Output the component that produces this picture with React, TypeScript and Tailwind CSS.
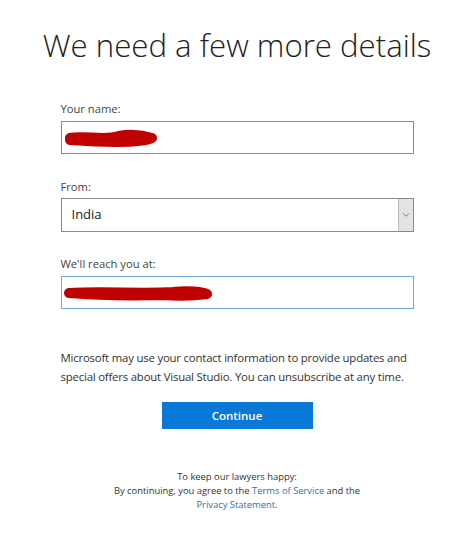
import { ChevronDown } from 'lucide-react';

function Scribble({ width, d }: { width: number; d: string }) {
  return (
    <svg width={width} height={18} viewBox={`0 0 ${width} 18`} className="block">
      <path d={d} stroke="#c00000" strokeWidth={10} strokeLinecap="round" strokeLinejoin="round" fill="none" />
    </svg>
  );
}

export default function App() {
  return (
    <div className="min-h-[549px] w-full bg-white text-[#333] font-['Open_Sans',sans-serif]">
      <h1 className="pt-[23px] text-center text-[31.2px] font-light leading-[44px] text-[#222]">
        We need a few more details
      </h1>

      <div className="mx-auto mt-[35px] w-[353px]">
        <label className="block text-[11.2px] leading-[14px] text-[#444]">Your name:</label>
        <div className="mt-[5px] flex h-[33px] items-center border border-[#8a8a8a] px-[2px]">
          <Scribble width={94} d="M6 9 C 20 6, 40 12, 55 7 C 70 4, 82 7, 88 9 C 80 13, 50 14, 6 11" />
        </div>

        <label className="mt-[26px] block text-[11.2px] leading-[14px] text-[#444]">From:</label>
        <div className="mt-[4px] flex h-[34px] items-stretch border border-[#8a8a8a]">
          <div className="flex flex-1 items-center pl-[10px] text-[13px] text-[#222]">India</div>
          <div className="flex w-[15px] items-center justify-center border-l border-[#bdbdbd] bg-[#e3e3e3] text-[#555]">
            <ChevronDown size={10} strokeWidth={1.75} />
          </div>
        </div>

        <label className="mt-[25px] block text-[11.2px] leading-[14px] text-[#444]">We'll reach you at:</label>
        <div className="mt-[5px] flex h-[33px] items-center border border-[#6fa9df] px-[1px]">
          <Scribble width={150} d="M6 9 C 40 7, 80 10, 110 8 C 125 6, 140 8, 144 10 C 130 12, 115 12, 100 11 C 60 12, 30 11, 6 9" />
        </div>

        <p className="mt-[39px] text-[11.4px] leading-[19px] tracking-[-0.2px] text-[#333]">
          Microsoft may use your contact information to provide updates and special offers about Visual Studio. You can unsubscribe at any time.
        </p>

        <div className="mt-[16px] flex justify-center">
          <button className="h-[27px] w-[151px] bg-[#0a78d7] text-[11.5px] font-semibold text-white">Continue</button>
        </div>
      </div>

      <div className="mt-[41px] text-center text-[9.4px] leading-[14px] text-[#333]">
        <p>To keep our lawyers happy:</p>
        <p>
          By continuing, you agree to the <span className="text-[#2e6fb8]">Terms of Service</span> and the
        </p>
        <p>
          <span className="text-[#2e6fb8]">Privacy Statement</span>.
        </p>
      </div>
    </div>
  );
}
